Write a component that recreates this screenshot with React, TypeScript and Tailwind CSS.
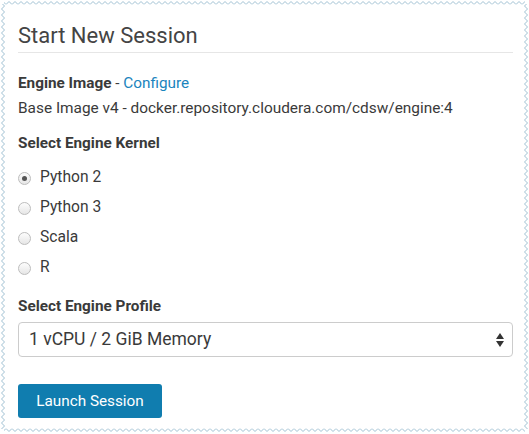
import React, { useState } from 'react'

const kernels = ['Python 2', 'Python 3', 'Scala', 'R']

const TornEdge = () => (
	<svg className="absolute inset-0 pointer-events-none" width="529" height="434">
		<defs>
			<pattern id="zzTop" x="0" y="1" width="6" height="4" patternUnits="userSpaceOnUse">
				<path d="M0 3.5 L3 0.5 L6 3.5" fill="none" stroke="#9fc0d2" strokeWidth="1" />
			</pattern>
			<pattern id="zzBottom" x="0" y="428" width="6" height="4" patternUnits="userSpaceOnUse">
				<path d="M0 0.5 L3 3.5 L6 0.5" fill="none" stroke="#9fc0d2" strokeWidth="1" />
			</pattern>
			<pattern id="zzLeft" x="1" y="0" width="4" height="6" patternUnits="userSpaceOnUse">
				<path d="M3.5 0 L0.5 3 L3.5 6" fill="none" stroke="#9fc0d2" strokeWidth="1" />
			</pattern>
			<pattern id="zzRight" x="524" y="0" width="4" height="6" patternUnits="userSpaceOnUse">
				<path d="M0.5 0 L3.5 3 L0.5 6" fill="none" stroke="#9fc0d2" strokeWidth="1" />
			</pattern>
		</defs>
		<rect x="4" y="1" width="521" height="4" fill="url(#zzTop)" />
		<rect x="4" y="428" width="521" height="4" fill="url(#zzBottom)" />
		<rect x="1" y="4" width="4" height="425" fill="url(#zzLeft)" />
		<rect x="524" y="4" width="4" height="425" fill="url(#zzRight)" />
	</svg>
)

const Radio = ({ checked }: { checked: boolean }) => (
	<span className="w-[13px] h-[13px] rounded-full border border-[#bdbdbd] bg-gradient-to-b from-[#fdfdfd] to-[#e6e6e6] flex items-center justify-center">
		{checked && <span className="w-[5px] h-[5px] rounded-full bg-[#555]" />}
	</span>
)

export default function App() {
	const [kernel, setKernel] = useState('Python 2')

	return (
		<div className="relative w-[529px] h-[434px] bg-white font-['Roboto',sans-serif] text-[#3a3a3a]">
			<TornEdge />
			<div className="pl-[18px] pr-[16px] pt-[21px]">
				<h1 className="text-[22px] leading-[30px] text-[#444] pb-[1px] border-b border-[#e6e6e6]">
					Start New Session
				</h1>

				<div className="mt-[18px] text-[15.3px] leading-[24px]">
					<span className="font-bold">Engine Image</span>
					<span> - </span>
					<a className="text-[#1b84bd]">Configure</a>
				</div>
				<div className="mt-[1px] text-[15.4px] leading-[24px]">
					Base Image v4 - docker.repository.cloudera.com/cdsw/engine:4
				</div>

				<div className="mt-[11px] text-[15.3px] leading-[24px] font-bold">Select Engine Kernel</div>
				<div className="mt-[8px]">
					{kernels.map(k => (
						<label
							key={k}
							className="h-[30px] flex items-center cursor-pointer"
							onClick={() => setKernel(k)}
						>
							<span className="w-[22px] flex">
								<Radio checked={kernel === k} />
							</span>
							<span className="text-[15.6px]">{k}</span>
						</label>
					))}
				</div>

				<div className="mt-[11px] text-[15.3px] leading-[24px] font-bold">Select Engine Profile</div>
				<div className="mt-[4px] h-[35px] w-[495px] border border-[#cccccc] rounded-[4px] flex items-center justify-between pl-[10px] pr-[8px]">
					<span className="text-[17.5px]">1 vCPU / 2 GiB Memory</span>
					<svg width="8" height="14" viewBox="0 0 8 14">
						<path d="M4 0 L8 6 L0 6 Z" fill="#333" />
						<path d="M0 8 L8 8 L4 14 Z" fill="#333" />
					</svg>
				</div>

				<button className="mt-[27px] h-[34px] w-[144px] bg-[#107daf] rounded-[3px] text-white text-[15.3px]">
					Launch Session
				</button>
			</div>
		</div>
	)
}
